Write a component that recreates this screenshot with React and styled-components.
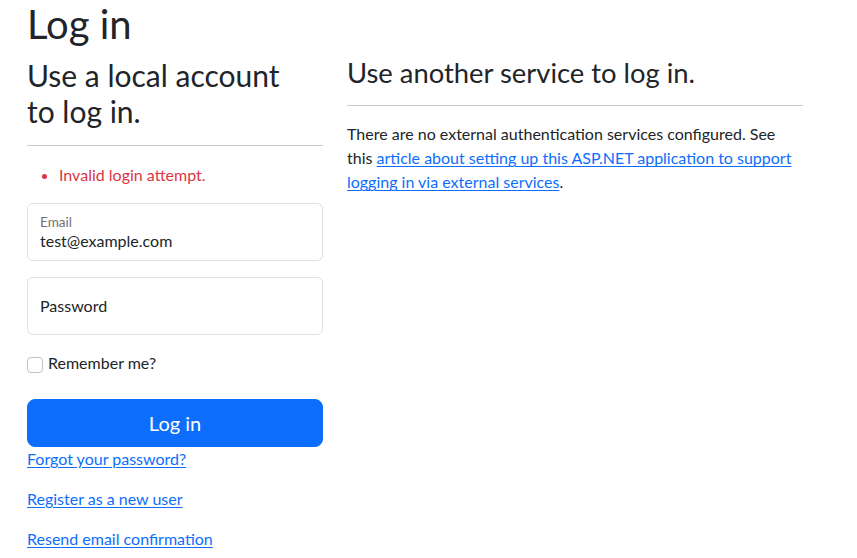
import React from "react";
import styled, { createGlobalStyle } from "styled-components";

const GlobalStyle = createGlobalStyle`
  html, body { margin: 0; padding: 0; background: #fff; }
  body {
    font-family: "Lato", "Liberation Sans", sans-serif;
    font-size: 16px;
    line-height: 1.5;
    color: #212529;
  }
  * { box-sizing: border-box; }
`;

const Page = styled.main`
  padding: 0 54px 0 27px;
`;

const Title = styled.h1`
  margin: 0 0 9px;
  font-size: 40px;
  line-height: 48px;
  font-weight: 400;
`;

const Row = styled.div`
  display: flex;
  gap: 24px;
  align-items: flex-start;
`;

const Column = styled.section`
  flex: 0 0 ${(p) => p.$width}px;
  width: ${(p) => p.$width}px;
`;

const SectionTitle = styled.h2`
  margin: 0 0 2px;
  max-width: ${(p) => p.$max || "none"};
  font-weight: 400;
  font-size: ${(p) => p.$size}px;
  line-height: ${(p) => p.$lh}px;
`;

const Rule = styled.hr`
  margin: 16px 0 ${(p) => (p.$after ? p.$after : 16)}px;
  border: 0;
  border-top: 1px solid #c8c9ca;
`;

const Errors = styled.ul`
  margin: 0 0 16px;
  padding-left: 32px;
  color: #dc3545;
  line-height: 24px;
`;

const Field = styled.div`
  position: relative;
  margin-bottom: 16px;
`;

const Input = styled.input`
  display: block;
  width: 100%;
  height: 58px;
  padding: 24px 12px 8px;
  border: 1px solid #dee2e6;
  border-radius: 6px;
  font: inherit;
  font-size: 16px;
  line-height: 24px;
  color: #212529;
  background: #fff;
  outline: none;
`;

const FloatLabel = styled.label`
  position: absolute;
  left: 13px;
  pointer-events: none;
  white-space: nowrap;
  ${(p) =>
    p.$floated
      ? `top: 11px; font-size: 13.6px; line-height: 16px; color: #6f7275;`
      : `top: 17px; font-size: 16px; line-height: 24px; color: #212529;`}
`;

const CheckRow = styled.label`
  display: flex;
  align-items: flex-start;
  gap: 5px;
  line-height: 24px;
  margin-bottom: 24px;
`;

const CheckBox = styled.input`
  appearance: none;
  width: 16px;
  height: 16px;
  margin: 6px 0 0;
  border: 1px solid #bfc1c3;
  border-radius: 4px;
  background: #fff;
  flex: 0 0 16px;
`;

const PrimaryButton = styled.button`
  display: block;
  width: 100%;
  height: 48px;
  padding: 8px 16px;
  border: 1px solid #0d6efd;
  border-radius: 8px;
  background: #0d6efd;
  color: #fff;
  font: inherit;
  font-size: 20px;
  line-height: 30px;
  cursor: pointer;
`;

const Para = styled.p`
  margin: 0 0 16px;
  line-height: 24px;
`;

const Link = styled.a`
  color: #0d6efd;
  text-decoration: underline;
  text-underline-offset: 2px;
`;

export default function App() {
  return (
    <>
      <GlobalStyle />
      <Page>
        <Title>Log in</Title>
        <Row>
          <Column $width={296}>
            <form onSubmit={(e) => e.preventDefault()}>
              <SectionTitle $size={30} $lh={36} $max="280px">
                Use a local account to log in.
              </SectionTitle>
              <Rule $after={17} />
              <Errors>
                <li>Invalid login attempt.</li>
              </Errors>
              <Field>
                <Input type="email" defaultValue="test@example.com" />
                <FloatLabel $floated>Email</FloatLabel>
              </Field>
              <Field>
                <Input type="password" />
                <FloatLabel>Password</FloatLabel>
              </Field>
              <CheckRow>
                <CheckBox type="checkbox" />
                Remember me?
              </CheckRow>
              <PrimaryButton type="submit">Log in</PrimaryButton>
              <Para>
                <Link href="#">Forgot your password?</Link>
              </Para>
              <Para>
                <Link href="#">Register as a new user</Link>
              </Para>
              <Para>
                <Link href="#">Resend email confirmation</Link>
              </Para>
            </form>
          </Column>
          <Column $width={456}>
            <SectionTitle as="h3" $size={27.4} $lh={32.4}>
              Use another service to log in.
            </SectionTitle>
            <Rule />
            <Para>
              There are no external authentication services configured. See this{" "}
              <Link href="#">
                article about setting up this ASP.NET application to support logging in via external
                services
              </Link>
              .
            </Para>
          </Column>
        </Row>
      </Page>
    </>
  );
}
